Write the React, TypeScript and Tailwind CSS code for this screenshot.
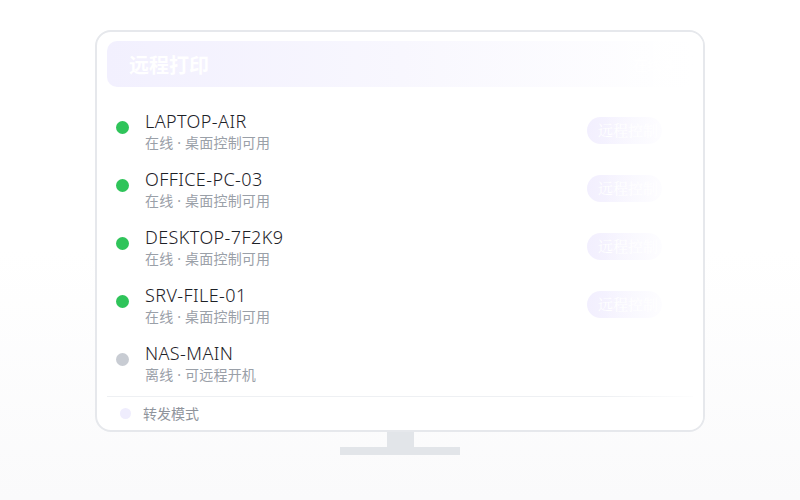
import React from "react";

const rows = [
  { name: "LAPTOP-AIR", sub: "在线 · 桌面控制可用", on: true },
  { name: "OFFICE-PC-03", sub: "在线 · 桌面控制可用", on: true },
  { name: "DESKTOP-7F2K9", sub: "在线 · 桌面控制可用", on: true },
  { name: "SRV-FILE-01", sub: "在线 · 桌面控制可用", on: true },
  { name: "NAS-MAIN", sub: "离线 · 可远程开机", on: false },
];

export default function App() {
  return (
    <div
      className="w-[800px] h-[500px] bg-gradient-to-b from-white via-white to-[#fafafb] flex flex-col items-center pt-[30px]"
      style={{ fontFamily: '"Noto Sans", "Noto Sans CJK SC", sans-serif' }}
    >
      <div className="relative w-[610px] h-[402px] rounded-[16px] border-2 border-[#e6e8ec] bg-white flex flex-col px-[10px] pt-[9px]">
        <div className="h-[46px] rounded-[10px] bg-gradient-to-r from-[#f2f0fe] via-[#f8f7fe] to-white flex items-center justify-between pl-[22px] pr-[20px]">
          <span className="text-[20px] font-bold text-white leading-none mt-[3px]">远程打印</span>
          <span className="text-[14px] text-white/80">在线 4</span>
        </div>
        <div className="flex flex-col mt-[22px]">
          {rows.map((r) => (
            <div key={r.name} className="h-[58px] flex items-start">
              <div
                className={`w-[13px] h-[13px] rounded-full mt-[12px] ml-[9px] ${r.on ? "bg-[#2fc45a]" : "bg-[#c8ccd3]"}`}
              />
              <div className="flex flex-col ml-[16px] flex-1">
                <span className="text-[18px] leading-[24px] font-light text-[#1d2127] tracking-[0.4px]">{r.name}</span>
                <span className="text-[14px] leading-[20px] text-[#9aa0a8] tracking-[0.2px]">{r.sub}</span>
              </div>
              {r.on && (
                <div className="mt-[8px] mr-[31px] h-[27px] w-[75px] rounded-full bg-gradient-to-r from-[#f2effe] to-[#fbfaff] flex items-center pl-[11px] overflow-hidden">
                  <span
                    className="text-[15px] text-white whitespace-nowrap"
                    style={{ fontFamily: '"Noto Serif CJK SC", "AR PL UMing CN", serif' }}
                  >
                    远程控制
                  </span>
                </div>
              )}
            </div>
          ))}
        </div>
        <div className="mt-[-3px] border-t border-[#eef0f3] flex items-center h-[33px]">
          <div className="w-[11px] h-[11px] rounded-full bg-[#efedfd] ml-[13px]" />
          <span className="ml-[12px] text-[14px] text-[#8f949c]">转发模式</span>
        </div>
        <div className="pointer-events-none absolute top-0 bottom-0 right-0 w-[100px] rounded-r-[14px] bg-gradient-to-r from-white/0 via-white/50 to-white" />
      </div>
      <div className="w-[27px] h-[15px] bg-[#e2e5e9]" />
      <div className="w-[120px] h-[8px] bg-[#e2e5e9]" />
    </div>
  );
}
